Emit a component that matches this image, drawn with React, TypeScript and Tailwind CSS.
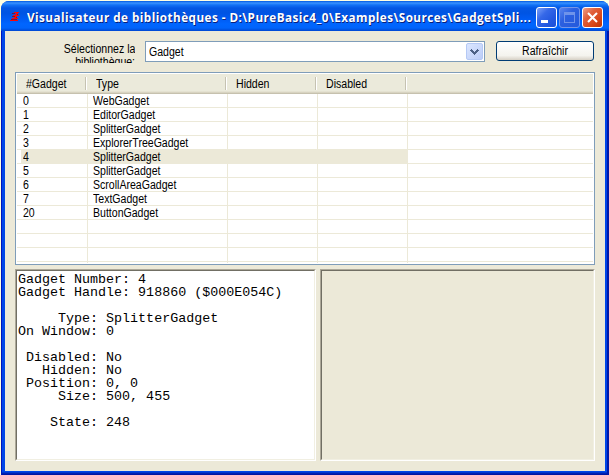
import React from "react";

const rows: [string, string][] = [
  ["0", "WebGadget"],
  ["1", "EditorGadget"],
  ["2", "SplitterGadget"],
  ["3", "ExplorerTreeGadget"],
  ["4", "SplitterGadget"],
  ["5", "SplitterGadget"],
  ["6", "ScrollAreaGadget"],
  ["7", "TextGadget"],
  ["20", "ButtonGadget"],
  ["", ""],
  ["", ""],
  ["", ""],
];

const details = `Gadget Number: 4
Gadget Handle: 918860 ($000E054C)

     Type: SplitterGadget
On Window: 0

 Disabled: No
   Hidden: No
 Position: 0, 0
     Size: 500, 455

    State: 248`;

function Narrow({ children, origin = "origin-left" }: { children: React.ReactNode; origin?: string }) {
  return <span className={`${origin} inline-block scale-x-[0.88] whitespace-nowrap`}>{children}</span>;
}

function TitleBar() {
  return (
    <header className="flex h-[30px] shrink-0 items-start bg-[linear-gradient(180deg,#0058e0_0px,#3a93ff_2px,#1272f5_4px,#0458e4_7px,#0054e3_12px,#005bf3_18px,#0066ff_23px,#0064fb_27px,#0046d0_30px)] pl-2 pr-[5px] pt-[6px]">
      <svg width="12" height="12" viewBox="0 0 12 12" className="mt-1 shrink-0" shapeRendering="crispEdges">
        <path d="M5 1h5v1H5zM7 2h2v1H7zM6 3h2v1H6zM4 4h6v1H4zM6 5h2v1H6zM5 6h2v1H5zM3 7h6v1H3zM1 9h8v1H1z" fill="#f80808" />
        <path d="M3 2h3v1H3zM8 3h1v1H8zM3 5h3v1H3zM7 6h1v1H7zM2 8h6v1H2z" fill="#6a1448" />
      </svg>
      <h1 className="ml-[6px] w-[506px] shrink-0 whitespace-nowrap font-['Open_Sans',sans-serif] text-[13px] font-bold leading-[20px] tracking-[0.51px] text-white [text-shadow:1px_1px_0_#0a1f7a]">
        <span className="inline-block origin-left scale-x-90">
          Visualisateur de bibliothèques - D:\PureBasic4_0\Examples\Sources\GadgetSpli...
        </span>
      </h1>
      <div className="ml-[3px] flex gap-[2px]">
        <div className="flex h-[21px] w-[21px] items-end rounded-[3px] border border-white bg-[linear-gradient(135deg,#7ba0f8,#3568e8_35%,#2257e0_70%,#1c50d8)] pb-[4px] pl-[4px]">
          <span className="h-[3px] w-[7px] bg-white" />
        </div>
        <div className="flex h-[21px] w-[21px] items-center justify-center rounded-[3px] border border-[#7796e6] bg-[linear-gradient(135deg,#5b86ee,#2c60e0_40%,#2359dc)]">
          <span className="h-[11px] w-[11px] border border-t-[3px] border-[#6f93ea]" />
        </div>
        <div className="flex h-[21px] w-[21px] items-center justify-center rounded-[3px] border border-white bg-[linear-gradient(135deg,#f0a088,#e0603c_35%,#d84618_70%,#b83408)]">
          <svg width="13" height="13" viewBox="0 0 13 13">
            <path d="M2 2l9 9M11 2l-9 9" stroke="#fff" strokeWidth="2.1" />
          </svg>
        </div>
      </div>
    </header>
  );
}

function Toolbar() {
  return (
    <div className="flex h-[21px]">
      <div className="mr-[10px] mt-[2px] flex h-[20px] w-[120px] flex-col items-end overflow-hidden leading-[13px]">
        <Narrow origin="origin-right">Sélectionnez la</Narrow>
        <Narrow origin="origin-right">bibliothèque:</Narrow>
      </div>
      <div className="flex w-[340px] justify-between border border-[#7f9db9] bg-white p-px">
        <span className="pl-[2px] leading-[18px]">
          <Narrow>Gadget</Narrow>
        </span>
        <span className="flex w-[17px] items-center justify-center rounded-[2px] border border-[#b5c9f5] bg-[linear-gradient(135deg,#dbe6ff,#bccdf7)]">
          <svg width="9" height="6" viewBox="0 0 9 6" shapeRendering="crispEdges">
            <path d="M0 1h1V0h1v1h1v1h1v1h1V2h1V1h1V0h1v1h1v1H8v1H7v1H6v1H5v1H4V5H3V4H2V3H1V2H0z" fill="#4d6185" />
          </svg>
        </span>
      </div>
      <button className="ml-[11px] h-[20px] w-[98px] rounded-[3px] border border-[#003c74] bg-[linear-gradient(180deg,#ffffff,#f4f3ee_75%,#d6d0c5)] leading-[18px]">
        <Narrow origin="origin-center">Rafraîchir</Narrow>
      </button>
    </div>
  );
}

const headings = [
  ["#Gadget", "w-[70px]"],
  ["Type", "w-[140px]"],
  ["Hidden", "w-[90px]"],
  ["Disabled", "w-[90px]"],
];

function GadgetList() {
  return (
    <section className="mt-[10px] h-[193px] w-[580px] border border-[#7f9db9] bg-white p-px">
      <div className="flex h-[20px] border-b border-[#c6c1ae] bg-[linear-gradient(180deg,#ebeadb_17px,#dedac8_18px,#d2cdbb_19px)]">
        {headings.map(([name, width]) => (
          <div key={name} className={`${width} flex shrink-0 items-start pt-[3px]`}>
            <span className="flex-1 pl-[9px] leading-[14px]">
              <Narrow>{name}</Narrow>
            </span>
            <span className="h-[13px] w-[2px] border-l border-r border-l-[#c5c2b2] border-r-white" />
          </div>
        ))}
      </div>
      {rows.map(([id, type], i) => (
        <div key={i} className="flex h-[14px] border-b border-[#ece9d8] leading-[14px]">
          <div className={`${i === 4 ? "bg-[#ece9d8]" : ""} ml-1 h-[14px] w-[66px] pl-[2px]`}>
            <Narrow>{id}</Narrow>
          </div>
          <div className={`${i === 4 ? "bg-[#ece9d8]" : ""} h-[14px] w-[140px] border-l border-[#ece9d8] pl-[5px]`}>
            <Narrow>{type}</Narrow>
          </div>
          <div className={`${i === 4 ? "bg-[#ece9d8]" : ""} w-[90px] border-l border-[#ece9d8]`} />
          <div className={`${i === 4 ? "bg-[#ece9d8]" : ""} w-[91px] border-l border-r border-[#ece9d8]`} />
        </div>
      ))}
      <div className="flex h-px">
        <div className="ml-[70px] w-[140px] border-l border-[#ece9d8]" />
        <div className="w-[90px] border-l border-[#ece9d8]" />
        <div className="w-[91px] border-l border-r border-[#ece9d8]" />
      </div>
    </section>
  );
}

function Inset({ className, children }: { className: string; children?: React.ReactNode }) {
  return (
    <div className={`${className} h-[192px] border border-b-white border-l-[#aca899] border-r-white border-t-[#aca899]`}>
      <div className="h-full border border-b-[#f1efe2] border-l-[#716f64] border-r-[#f1efe2] border-t-[#716f64]">
        {children}
      </div>
    </div>
  );
}

export default function App() {
  return (
    <div className="h-[475px] w-[609px] overflow-hidden bg-[#ffffe1] pl-px pt-px font-['Liberation_Sans',Arial,sans-serif] text-[12px] text-black">
      <main className="flex h-[474px] w-[608px] flex-col overflow-hidden rounded-t-[8px] bg-[#0046e8]">
        <TitleBar />
        <div className="h-[444px] bg-[linear-gradient(180deg,#0046e8_441px,#0026b8_442px,#00109c_444px)]">
          <div className="flex h-full border-l border-r-2 border-l-[#0014bc] border-r-[#0018a8] pb-[4px] pl-[3px] pr-[2px]">
            <div className="w-[600px] shrink-0 bg-[#ece9d8] pl-[10px] pt-[10px]">
              <Toolbar />
              <GadgetList />
              <div className="mt-[4px] flex gap-[4px]">
                <Inset className="w-[301px] bg-white">
                  <pre className="pl-px pt-[2px] font-['Liberation_Mono',monospace] text-[13.35px] leading-[13px]">{details}</pre>
                </Inset>
                <Inset className="w-[275px]" />
              </div>
            </div>
          </div>
        </div>
      </main>
    </div>
  );
}
